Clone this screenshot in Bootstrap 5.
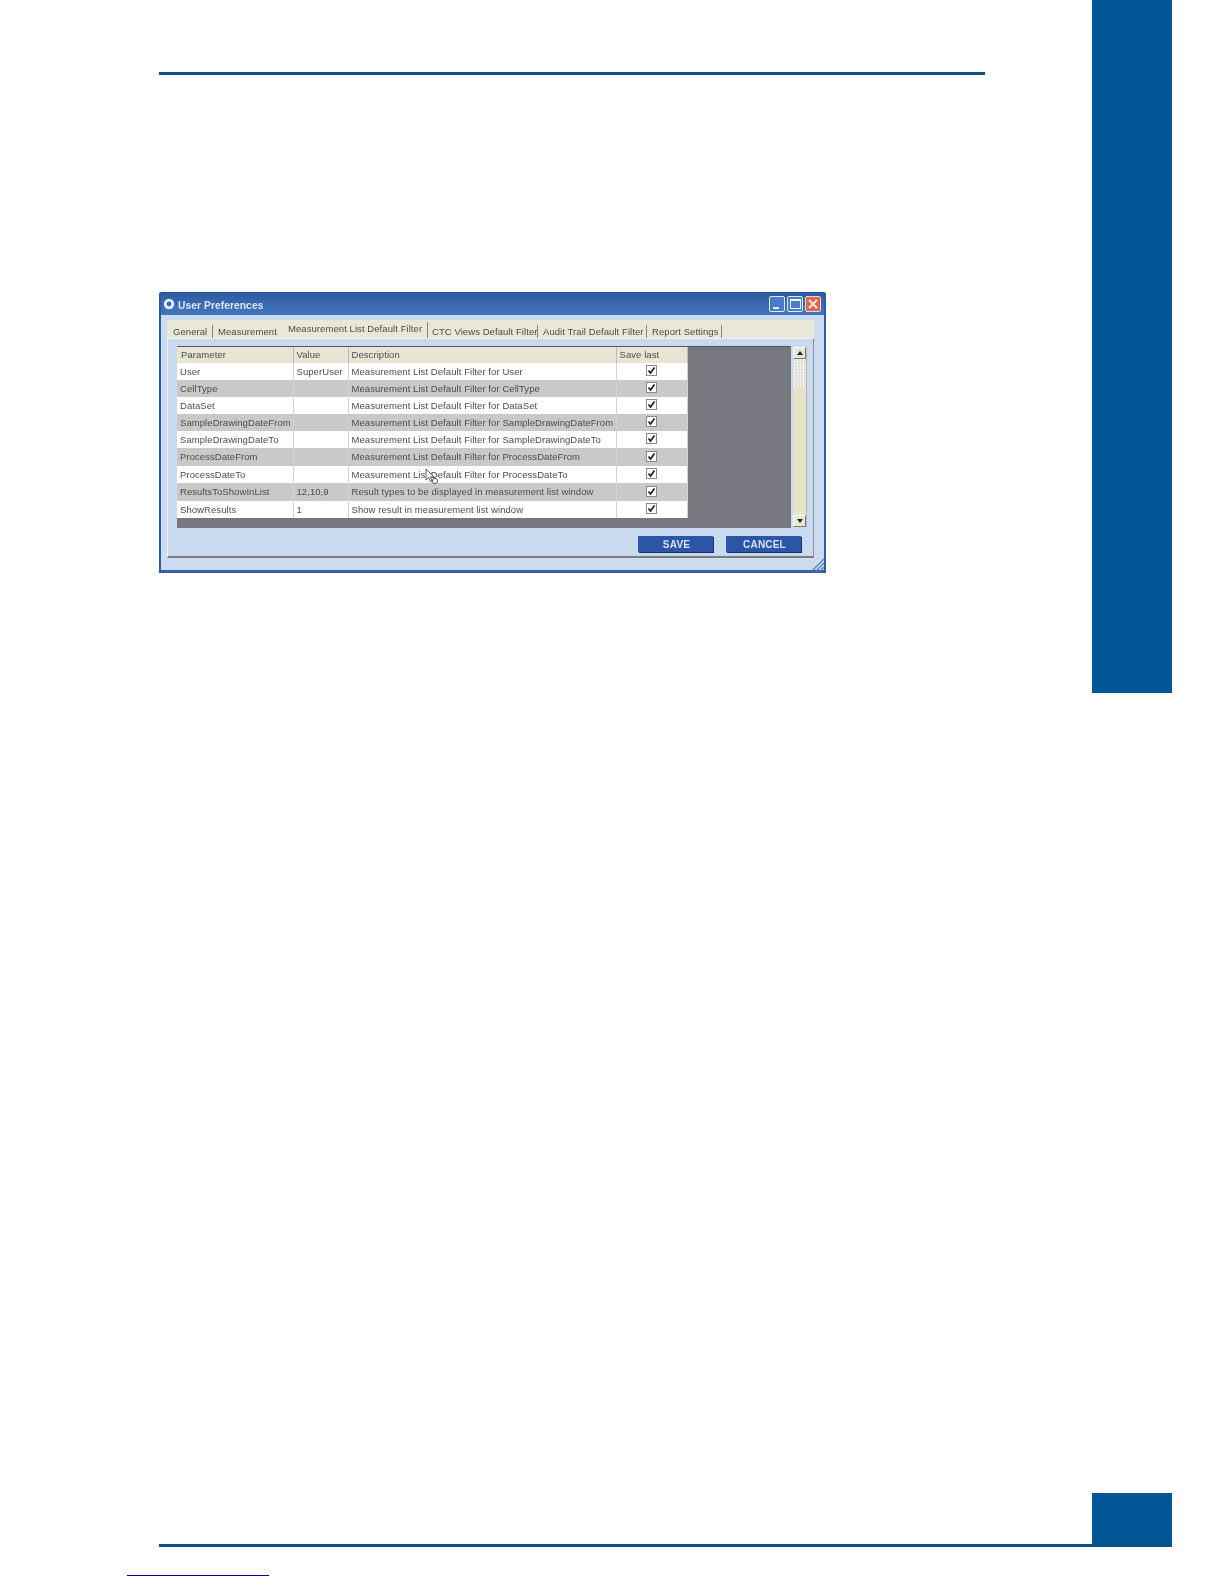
<!DOCTYPE html>
<html lang="en">
<head>
<meta charset="utf-8">
<title>User Preferences</title>
<link href="https://cdn.jsdelivr.net/npm/bootstrap@5.3.0/dist/css/bootstrap.min.css" rel="stylesheet">
<style>
html,body{margin:0;background:#fff}
.sheet{width:1224px;height:1584px;overflow:hidden;background:#fff}
.main-col{width:826px;margin-left:159px;margin-right:107px}
.side-tab{width:80px;height:693px;background:#025796}
.top-rule{height:3px;margin-top:72px;background:#0c5488}
.win{position:relative;width:667px;height:281px;margin-top:217px;background:#c6d9f0;border-left:2px solid #2f5aa6;border-right:2px solid #2f5aa6;border-bottom:3px solid #3a5dab;border-top:1px solid #23508f;border-radius:2px 2px 0 0;filter:blur(.4px);font-family:"Liberation Sans",Arial,sans-serif}
.win-title{height:22px;padding:0 3px 0 2px;background:linear-gradient(#2f5a9f,#3d6db7 60%,#4173bb);color:#dfe8f4;gap:3px}
.win-title-text{font-size:10.2px;font-weight:700;letter-spacing:.1px;line-height:22px;padding-top:3px}
.win-ctrls{gap:2px;margin-left:auto}
.win-ctrl{width:16px;height:16px;border:1px solid #dfe8f5;border-radius:2px;background:#4a7cc6}
.win-ctrl.closer{background:#d9694a;border-color:#f0d5cc}
.win-client{padding:5px 10px 0 6px;background:#cbdcf1;height:255px}
.tabstrip{height:18px;background:#e9e7d8;padding-left:6px;flex-wrap:nowrap;border:0}
.tabstrip .nav-link{padding:0;border:0;border-right:1px solid #85857c;border-radius:0;height:13px;margin-top:5px;margin-bottom:0;color:#4a4a4a;font-size:9.5px;line-height:13px;letter-spacing:.07px;white-space:nowrap;background:transparent}
.tabstrip .tl-1{width:40px}
.tabstrip .nav-link.tl-2{width:65px;padding-left:5px;border:0}
.tabstrip .tab-on{margin-top:2px;margin-left:10px;width:140px;height:16px}
.tabstrip .tl-4{width:110px;padding-left:4px}
.tabstrip .tl-5{width:109px;padding-left:5px}
.tabstrip .tl-6{width:75px;padding-left:5px}
.tab-panel{height:220px;background:#c9daf0;border-top:1px solid #eef3fa;border-left:1px solid #eef3fa;border-right:1px solid #8b8f96;border-bottom:2px solid #7b7c78;padding:7px 6px 0 9px}
.grid-area{height:182px}
.grid-pane{flex:0 0 614px;height:182px;background:#77787f;border-top:1px solid #55565c}
.prefs{width:510px;margin:0;table-layout:fixed;border-collapse:collapse;--bs-table-bg:transparent}
.prefs th,.prefs td{padding:0 0 0 3px;border:0;border-right:1px solid #d5d5d0;height:17px;line-height:16px;font-size:9.5px;font-weight:400;letter-spacing:.07px;color:#4c4c4c;white-space:nowrap;overflow:hidden;vertical-align:middle}
.prefs th{background:#e8e5d5;height:16px;border-right:1px solid #bdbcae}
.prefs th:first-child{padding-left:4px}
.prefs tbody tr{background:#fff}
.prefs tbody tr:nth-child(even){background:#c9c9c9}
.prefs tbody tr:nth-child(even) td{border-right-color:#d3d3d3}
.prefs tbody tr:nth-child(6) td,.prefs tbody tr:nth-child(8) td{height:18px}
.prefs .chk-cell{padding:0 0 0 29px}
.chk{display:block;width:11px;height:11px;margin-top:-2px}
.vscroll{flex:0 0 14px;height:180px;margin:1px 0 0 2px;background:#e6e4cc;border-right:1px solid #b8b8a8}
.sb-btn{height:12px;background:#e9e6d8;border:1px solid #fff;border-right-color:#77786f;border-bottom-color:#77786f}
.sb-track{height:29px;background:repeating-conic-gradient(#f2f2ea 0 25%,#dcdcd2 0 50%) 0 0/3px 3px}
.sb-thumb{height:127px;background:#e5e3c8}
.sb-arrow{width:0;height:0;border-left:3px solid transparent;border-right:3px solid transparent}
.sb-arrow.up{border-bottom:4px solid #222}
.sb-arrow.dn{border-top:4px solid #222}
.win-actions{gap:13px;padding:8px 6px 0 0}
.win-btn{width:75px;height:16px;padding:0 0 0 2px;border:0;border-radius:0;background:#2c55a8;color:#d8e1f0;font-size:10px;font-weight:700;letter-spacing:.2px;line-height:17px;box-shadow:1px 1px 0 #16306a}
.win-btn:hover{background:#2c55a8;color:#d8e1f0}
.grip{position:absolute;right:-1px;bottom:-2px;width:15px;height:15px}
.cursor-mark{position:absolute;left:264px;top:175px;width:14px;height:17px}
.foot-block{margin-top:auto;margin-left:159px;width:1013px}
.foot-square{width:80px;height:51px;background:#025796}
.foot-rule{height:3px;background:#0c5488}
.foot-note{width:142px;height:1px;margin:28px 0 8px 127px;background:#0000b0}
</style>
</head>
<body>
<div class="sheet d-flex flex-column">
  <div class="d-flex align-items-start">
    <div class="main-col">
      <div class="top-rule"></div>
      <div class="win">
        <div class="win-title d-flex align-items-center">
          <svg width="12" height="12" viewBox="0 0 12 12"><circle cx="6" cy="6" r="5.2" fill="#e6eef8"/><circle cx="6" cy="6" r="2.4" fill="#3b6ab2"/></svg>
          <span class="win-title-text">User Preferences</span>
          <div class="win-ctrls d-flex">
            <div class="win-ctrl d-flex align-items-end justify-content-center"><svg width="8" height="5" viewBox="0 0 8 5"><rect x="0" y="1" width="6" height="2" fill="#eef3fa"/></svg></div>
            <div class="win-ctrl d-flex align-items-center justify-content-center"><svg width="11" height="10" viewBox="0 0 11 10"><rect x=".5" y="1" width="10" height="8.5" fill="none" stroke="#eef3fa"/><rect x="0" y="0" width="11" height="2" fill="#eef3fa"/></svg></div>
            <div class="win-ctrl closer d-flex align-items-center justify-content-center"><svg width="10" height="10" viewBox="0 0 10 10"><path d="M1 1 9 9M9 1 1 9" stroke="#f6e7e2" stroke-width="2"/></svg></div>
          </div>
        </div>
        <div class="win-client">
          <ul class="nav nav-tabs tabstrip">
            <li class="nav-item"><a class="nav-link tl-1" href="#">General</a></li>
            <li class="nav-item"><a class="nav-link tl-2" href="#">Measurement</a></li>
            <li class="nav-item"><a class="nav-link tab-on" href="#">Measurement List Default Filter</a></li>
            <li class="nav-item"><a class="nav-link tl-4" href="#">CTC Views Default Filter</a></li>
            <li class="nav-item"><a class="nav-link tl-5" href="#">Audit Trail Default Filter</a></li>
            <li class="nav-item"><a class="nav-link tl-6" href="#">Report Settings</a></li>
          </ul>
          <div class="tab-panel">
            <div class="grid-area d-flex">
              <div class="grid-pane">
                <table class="table prefs">
                  <colgroup><col style="width:116px"><col style="width:55px"><col style="width:268px"><col style="width:71px"></colgroup>
                  <thead><tr><th>Parameter</th><th>Value</th><th>Description</th><th>Save last</th></tr></thead>
                  <tbody>
                    <tr><td>User</td><td>SuperUser</td><td>Measurement List Default Filter for User</td><td class="chk-cell"><svg class="chk" viewBox="0 0 11 11"><rect x=".5" y=".5" width="10" height="10" fill="#fff" stroke="#8a8a8a"/><path d="M2.5 5.5 4.5 8 8.5 2.5" fill="none" stroke="#222" stroke-width="1.7"/></svg></td></tr>
                    <tr><td>CellType</td><td></td><td>Measurement List Default Filter for CellType</td><td class="chk-cell"><svg class="chk" viewBox="0 0 11 11"><rect x=".5" y=".5" width="10" height="10" fill="#fff" stroke="#8a8a8a"/><path d="M2.5 5.5 4.5 8 8.5 2.5" fill="none" stroke="#222" stroke-width="1.7"/></svg></td></tr>
                    <tr><td>DataSet</td><td></td><td>Measurement List Default Filter for DataSet</td><td class="chk-cell"><svg class="chk" viewBox="0 0 11 11"><rect x=".5" y=".5" width="10" height="10" fill="#fff" stroke="#8a8a8a"/><path d="M2.5 5.5 4.5 8 8.5 2.5" fill="none" stroke="#222" stroke-width="1.7"/></svg></td></tr>
                    <tr><td>SampleDrawingDateFrom</td><td></td><td>Measurement List Default Filter for SampleDrawingDateFrom</td><td class="chk-cell"><svg class="chk" viewBox="0 0 11 11"><rect x=".5" y=".5" width="10" height="10" fill="#fff" stroke="#8a8a8a"/><path d="M2.5 5.5 4.5 8 8.5 2.5" fill="none" stroke="#222" stroke-width="1.7"/></svg></td></tr>
                    <tr><td>SampleDrawingDateTo</td><td></td><td>Measurement List Default Filter for SampleDrawingDateTo</td><td class="chk-cell"><svg class="chk" viewBox="0 0 11 11"><rect x=".5" y=".5" width="10" height="10" fill="#fff" stroke="#8a8a8a"/><path d="M2.5 5.5 4.5 8 8.5 2.5" fill="none" stroke="#222" stroke-width="1.7"/></svg></td></tr>
                    <tr><td>ProcessDateFrom</td><td></td><td>Measurement List Default Filter for ProcessDateFrom</td><td class="chk-cell"><svg class="chk" viewBox="0 0 11 11"><rect x=".5" y=".5" width="10" height="10" fill="#fff" stroke="#8a8a8a"/><path d="M2.5 5.5 4.5 8 8.5 2.5" fill="none" stroke="#222" stroke-width="1.7"/></svg></td></tr>
                    <tr><td>ProcessDateTo</td><td></td><td>Measurement List Default Filter for ProcessDateTo</td><td class="chk-cell"><svg class="chk" viewBox="0 0 11 11"><rect x=".5" y=".5" width="10" height="10" fill="#fff" stroke="#8a8a8a"/><path d="M2.5 5.5 4.5 8 8.5 2.5" fill="none" stroke="#222" stroke-width="1.7"/></svg></td></tr>
                    <tr><td>ResultsToShowInList</td><td>12,10,9</td><td>Result types to be displayed in measurement list window</td><td class="chk-cell"><svg class="chk" viewBox="0 0 11 11"><rect x=".5" y=".5" width="10" height="10" fill="#fff" stroke="#8a8a8a"/><path d="M2.5 5.5 4.5 8 8.5 2.5" fill="none" stroke="#222" stroke-width="1.7"/></svg></td></tr>
                    <tr><td>ShowResults</td><td>1</td><td>Show result in measurement list window</td><td class="chk-cell"><svg class="chk" viewBox="0 0 11 11"><rect x=".5" y=".5" width="10" height="10" fill="#fff" stroke="#8a8a8a"/><path d="M2.5 5.5 4.5 8 8.5 2.5" fill="none" stroke="#222" stroke-width="1.7"/></svg></td></tr>
                  </tbody>
                </table>
              </div>
              <div class="vscroll d-flex flex-column">
                <div class="sb-btn d-flex align-items-center justify-content-center"><div class="sb-arrow up"></div></div>
                <div class="sb-track"></div>
                <div class="sb-thumb"></div>
                <div class="sb-btn d-flex align-items-center justify-content-center"><div class="sb-arrow dn"></div></div>
              </div>
            </div>
            <div class="win-actions d-flex justify-content-end">
              <button type="button" class="btn win-btn">SAVE</button>
              <button type="button" class="btn win-btn">CANCEL</button>
            </div>
          </div>
        </div>
        <svg class="grip" viewBox="0 0 15 15"><path d="M14 2 2 14M14 6 6 14M14 10 10 14" stroke="#5f7fb0" stroke-width="1.3"/></svg>
        <svg class="cursor-mark" viewBox="0 0 14 17"><path d="M1 1V12L3.6 9.6 5.4 13.6 7 13 5.4 9H9Z" fill="#fff" stroke="#333" stroke-width=".8"/><circle cx="10" cy="13" r="2.6" fill="#fff" stroke="#333" stroke-width=".8"/></svg>
      </div>
    </div>
    <div class="side-tab"></div>
  </div>
  <div class="foot-block">
    <div class="d-flex justify-content-end"><div class="foot-square"></div></div>
    <div class="foot-rule"></div>
  </div>
  <div class="foot-note"></div>
</div>
<script src="https://cdn.jsdelivr.net/npm/bootstrap@5.3.0/dist/js/bootstrap.bundle.min.js"></script>
</body>
</html>
